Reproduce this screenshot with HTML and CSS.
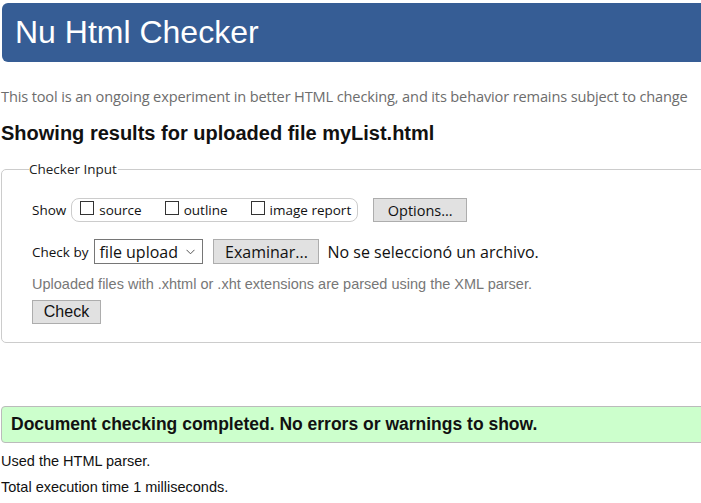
FILE: index.html
```html
<!DOCTYPE html>
<html>
<head>
<meta charset="utf-8">
<link rel="stylesheet" href="styles.css">
</head>
<body>
<div class="page">
  <h1 class="banner">Nu Html Checker</h1>
  <p class="intro">This tool is an ongoing experiment in better HTML checking, and its behavior remains subject to change</p>
  <h2 class="results-title">Showing results for uploaded file myList.html</h2>
  <fieldset class="checker">
    <legend class="legend">Checker Input</legend>
    <div class="row show-row">
      <span class="label">Show</span>
      <span class="pill">
        <label class="opt"><span class="box"></span>source</label>
        <label class="opt"><span class="box"></span>outline</label>
        <label class="opt"><span class="box"></span>image report</label>
      </span>
      <span class="btn options-btn">Options...</span>
    </div>
    <div class="row check-row">
      <span class="label">Check by</span>
      <span class="select">file upload<svg class="caret" width="9" height="6" viewBox="0 0 9 6"><path d="M0.5 0.8 L4.5 4.8 L8.5 0.8" fill="none" stroke="#555" stroke-width="1"/></svg></span>
      <span class="btn file-btn">Examinar...</span>
      <span class="nofile">No se seleccionó un archivo.</span>
    </div>
    <p class="hint">Uploaded files with .xhtml or .xht extensions are parsed using the XML parser.</p>
    <span class="btn check-btn">Check</span>
  </fieldset>
  <div class="success">Document checking completed. No errors or warnings to show.</div>
  <p class="meta">Used the HTML parser.</p>
  <p class="meta">Total execution time 1 milliseconds.</p>
</div>
</body>
</html>
```
FILE: styles.css
```css
html, body {
  margin: 0;
  padding: 0;
  background: #fff;
  overflow: hidden;
}
.page {
  width: 740px;
  padding: 3px 0 0 1px;
  font-family: "Liberation Sans", Arial, sans-serif;
  color: #111;
}
.banner {
  margin: 0 0 0 1px;
  height: 59px;
  box-sizing: border-box;
  background: #365d95;
  color: #fff;
  border-radius: 6px;
  font-weight: normal;
  font-size: 32px;
  line-height: 59px;
  padding-left: 13px;
}
.intro {
  margin: 25px 0 0 0;
  font-family: "Open Sans", "Noto Sans", sans-serif;
  font-size: 14.6px;
  line-height: 18px;
  color: #6d6d6d;
  letter-spacing: -0.15px;
}
.results-title {
  margin: 17px 0 0 0;
  font-size: 20px;
  line-height: 22px;
  font-weight: bold;
  color: #111;
}
.checker {
  margin: 16px 0 0 0;
  padding: 17px 0 18px 30px;
  border: 1px solid #ccc;
  border-radius: 5px;
  font-family: "Open Sans", "Noto Sans", sans-serif;
  font-size: 13px;
  color: #111;
}
.legend {
  margin-left: -3px;
  padding: 0 1px 0 0;
  font-size: 13.5px;
  color: #222;
}
.row {
  display: flex;
  align-items: center;
}
.label {
  margin-right: 5px;
  font-size: 13.5px;
}
.pill {
  display: inline-flex;
  align-items: center;
  height: 22px;
  border: 1px solid #ccc;
  border-radius: 8px;
  padding: 0 6px 0 8px;
  gap: 23px;
  font-size: 13.5px;
}
.opt {
  display: inline-flex;
  align-items: center;
}
.box {
  width: 14px;
  height: 14px;
  border: 1px solid #333;
  box-sizing: border-box;
  margin-right: 5px;
  position: relative;
  top: -2px;
}
.btn {
  display: inline-flex;
  align-items: center;
  justify-content: center;
  background: #e1e1e1;
  border: 1px solid #adadad;
  box-sizing: border-box;
  color: #111;
  font-size: 14.5px;
}
.options-btn {
  margin-left: 15px;
  width: 94px;
  height: 24px;
}
.show-row {
  margin-top: 3px;
}
.check-row {
  margin-top: 17px;
}
.select {
  display: inline-flex;
  align-items: center;
  justify-content: space-between;
  width: 109px;
  height: 25px;
  box-sizing: border-box;
  border: 1px solid #767676;
  padding: 0 7px 0 4px;
  font-size: 16px;
  margin-left: 1px;
}
.file-btn {
  margin-left: 10px;
  width: 106px;
  height: 25px;
  font-size: 16px;
}
.nofile {
  margin-left: 8px;
  font-size: 16px;
}
.hint {
  margin: 11px 0 0 0;
  font-family: "Liberation Sans", Arial, sans-serif;
  font-size: 14.5px;
  color: #777;
  line-height: 18px;
}
.check-btn {
  margin-top: 7px;
  width: 69px;
  height: 24px;
  font-family: "Liberation Sans", Arial, sans-serif;
  font-size: 16px;
}
.success {
  margin-top: 63px;
  height: 37px;
  box-sizing: border-box;
  background: #ccffcc;
  border: 1px solid #bbb;
  border-radius: 4px;
  padding-left: 9px;
  font-weight: bold;
  font-size: 17.5px;
  line-height: 35px;
  color: #111;
}
.meta {
  margin: 9px 0 0 0;
  font-size: 14.5px;
  line-height: 18px;
  color: #111;
}
.meta + .meta {
  margin-top: 8px;
}
```
